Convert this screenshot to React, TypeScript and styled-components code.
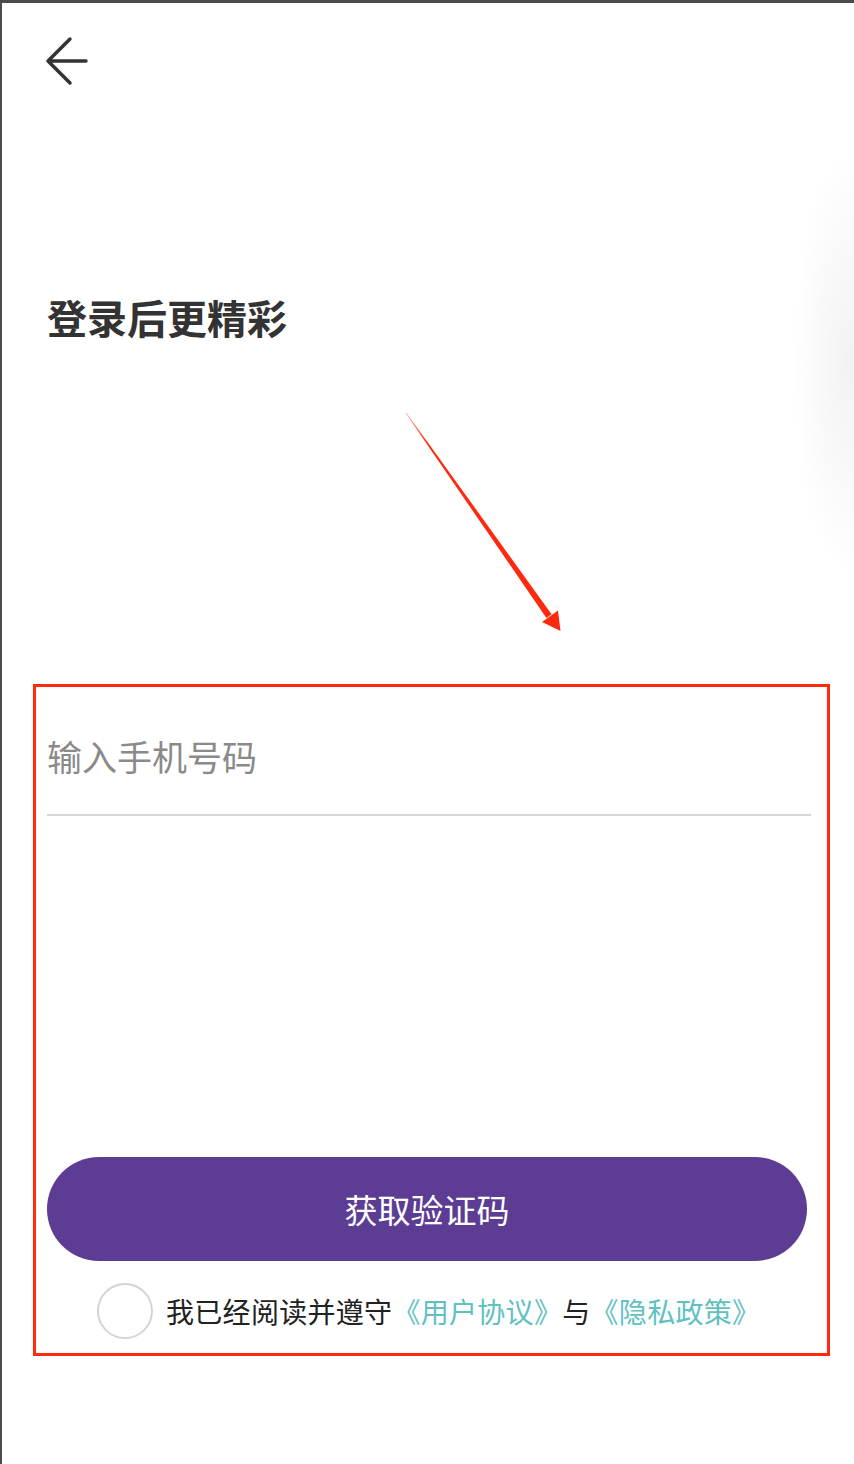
import React from "react";
import styled, { createGlobalStyle } from "styled-components";

const Global = createGlobalStyle`
  html, body { margin: 0; padding: 0; background: #ffffff; }
  body { font-family: "Noto Sans CJK SC", "Noto Sans", sans-serif; }
  * { box-sizing: border-box; }
`;

const Page = styled.div`
  position: relative;
  width: 854px;
  height: 1464px;
  overflow: hidden;
  background: #ffffff;
  border-top: 3px solid #4b4b4b;
  border-left: 2px solid #4b4b4b;
  display: flex;
  flex-direction: column;
`;

const SideGlow = styled.div`
  position: absolute;
  right: -50px;
  top: 150px;
  width: 110px;
  height: 420px;
  border-radius: 50%;
  background: radial-gradient(ellipse at center, rgba(0, 0, 0, 0.05) 0%, rgba(0, 0, 0, 0.02) 45%, rgba(0, 0, 0, 0) 72%);
  pointer-events: none;
`;

const Header = styled.div`
  height: 110px;
  padding: 29px 0 0 42px;
`;

const BackButton = styled.button`
  width: 50px;
  height: 54px;
  padding: 0;
  border: none;
  background: transparent;
  cursor: pointer;
  display: block;
`;

const Title = styled.h1`
  margin: 178px 0 0 45px;
  font-size: 40px;
  line-height: 52px;
  font-weight: 700;
  color: #333333;
  letter-spacing: 0;
`;

const Pointer = styled.svg`
  position: absolute;
  left: 0;
  top: 0;
  pointer-events: none;
`;

const FormBox = styled.section`
  margin: 341px 24px 0 31px;
  border: 3px solid #fe2a10;
  padding: 0 16px 14px 11px;
  display: flex;
  flex-direction: column;
`;

const InputWrap = styled.div`
  padding: 47px 0 38px;
  border-bottom: 2px solid #d6d6d6;
`;

const PhoneInput = styled.input`
  display: block;
  width: 100%;
  height: 42px;
  padding: 0;
  border: none;
  outline: none;
  background: transparent;
  font-family: "Noto Sans CJK SC", "Noto Sans", sans-serif;
  font-size: 35px;
  color: #333333;
  &::placeholder {
    color: #8a8a8a;
  }
`;

const SubmitButton = styled.button`
  margin: 341px 4px 0 0;
  height: 104px;
  border: none;
  border-radius: 52px;
  background: #5c3d93;
  color: #ffffff;
  font-family: "Noto Sans CJK SC", "Noto Sans", sans-serif;
  font-size: 33px;
  letter-spacing: 0;
  cursor: pointer;
`;

const AgreeRow = styled.div`
  margin: 22px 0 0 50px;
  display: flex;
  align-items: center;
  gap: 13px;
`;

const RadioCircle = styled.span`
  width: 56px;
  height: 56px;
  border-radius: 50%;
  border: 2px solid #d4d4d4;
  flex: none;
`;

const AgreeText = styled.p`
  margin: 0;
  font-size: 28px;
  line-height: 40px;
  letter-spacing: 0.3px;
  color: #222222;
  white-space: nowrap;
`;

const Link = styled.span`
  color: #5fc1c0;
`;

export default function App() {
  return (
    <>
      <Global />
      <Page>
        <SideGlow />
        <Header>
          <BackButton aria-label="返回">
            <svg width="50" height="54" viewBox="0 0 50 54" fill="none">
              <path
                d="M26 7 L4 29 L26 51 M4 29 H42"
                stroke="#333333"
                strokeWidth="3.5"
                strokeLinecap="round"
                strokeLinejoin="round"
              />
            </svg>
          </BackButton>
        </Header>
        <Title>登录后更精彩</Title>
        <FormBox>
          <InputWrap>
            <PhoneInput type="tel" placeholder="输入手机号码" />
          </InputWrap>
          <SubmitButton>获取验证码</SubmitButton>
          <AgreeRow>
            <RadioCircle />
            <AgreeText>
              我已经阅读并遵守<Link>《用户协议》</Link>与<Link>《隐私政策》</Link>
            </AgreeText>
          </AgreeRow>
        </FormBox>
        <Pointer width="854" height="1464" viewBox="0 0 854 1464">
          <defs>
            <linearGradient id="shaft" x1="404" y1="410" x2="548" y2="613" gradientUnits="userSpaceOnUse">
              <stop offset="0" stopColor="#fe2a10" stopOpacity="0.3" />
              <stop offset="0.15" stopColor="#fe2a10" stopOpacity="1" />
              <stop offset="1" stopColor="#fe2a10" />
            </linearGradient>
          </defs>
          <polygon points="403.6,410.3 404.4,409.7 549.6,611.3 544.4,614.9" fill="url(#shaft)" />
          <polygon points="540,619 556,607.5 558.5,628" fill="#fe2a10" />
        </Pointer>
      </Page>
    </>
  );
}
